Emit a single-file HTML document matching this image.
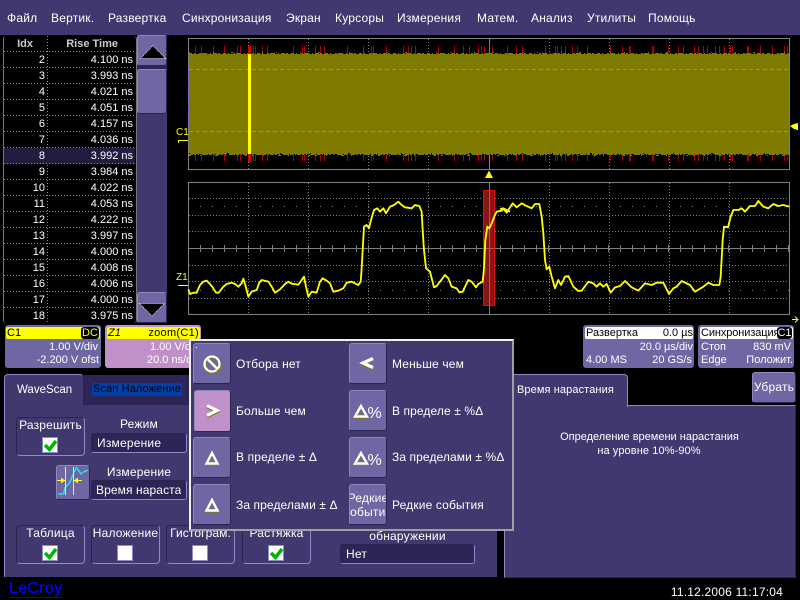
<!DOCTYPE html>
<html><head><meta charset="utf-8">
<style>
html,body{margin:0;padding:0;background:#000;}
#s{position:relative;width:800px;height:600px;overflow:hidden;background:#000;font-family:"Liberation Sans",sans-serif;font-size:12px;color:#fff;letter-spacing:.2px;}
#s div,#s svg{position:absolute;}
.t{white-space:nowrap;line-height:14px;}
.m{top:11px;}
.s{font-size:11px;letter-spacing:0;}
.r{position:absolute;left:4px;width:131px;height:16px;background:repeating-linear-gradient(90deg,#909090 0 1px,transparent 1px 3px) 0 15px/131px 1px no-repeat;}
.r b{font-weight:normal;position:absolute;right:90px;top:1px;line-height:14px;font-size:11px;letter-spacing:0;}
.r i{font-style:normal;position:absolute;right:2px;top:1px;line-height:14px;font-size:11px;letter-spacing:0;white-space:nowrap;}
.btn{background:#6f66a4;border:1px solid;border-color:#8f87c0 #2b2450 #2b2450 #8f87c0;border-radius:3px;box-sizing:border-box;}
.grp{box-sizing:border-box;border:1px solid;border-color:#2b2450 #9088c8 #9088c8 #2b2450;border-radius:4px;}
.cb{box-sizing:border-box;width:16px;height:16px;background:#fff;border:1px solid #9088c8;}
.cmb{box-sizing:border-box;background:#2c2555;border:1px solid;border-color:#2b2450 #9088c8 #9088c8 #2b2450;border-radius:3px;overflow:hidden;white-space:nowrap;line-height:18px;padding-left:5px;}
.c{text-align:center;}
</style></head><body><div id="s">

<div style="left:0;top:0;width:800px;height:35px;background:#423870"></div>
<div class="t m" style="left:7px">Файл</div>
<div class="t m" style="left:51px">Вертик.</div>
<div class="t m" style="left:108px">Развертка</div>
<div class="t m" style="left:182px">Синхронизация</div>
<div class="t m" style="left:286px">Экран</div>
<div class="t m" style="left:335px">Курсоры</div>
<div class="t m" style="left:397px">Измерения</div>
<div class="t m" style="left:477px">Матем.</div>
<div class="t m" style="left:531px">Анализ</div>
<div class="t m" style="left:587px">Утилиты</div>
<div class="t m" style="left:648px">Помощь</div>

<!-- table -->
<div style="left:3px;top:36px;width:132px;height:287px;border-left:1px solid #777;border-right:1px solid #777;border-radius:3px"></div>
<div style="left:47px;top:36px;width:1px;height:287px;background:repeating-linear-gradient(180deg,#909090 0 1px,transparent 1px 3px)"></div>
<div class="r" style="top:36px"><b style="right:102px;color:#ccc;font-weight:bold">Idx</b><i style="right:17px;color:#ccc;font-weight:bold">Rise Time</i></div>
<div class="r" style="top:52px"><b>2</b><i>4.100 ns</i></div>
<div class="r" style="top:68px"><b>3</b><i>3.993 ns</i></div>
<div class="r" style="top:84px"><b>4</b><i>4.021 ns</i></div>
<div class="r" style="top:100px"><b>5</b><i>4.051 ns</i></div>
<div class="r" style="top:116px"><b>6</b><i>4.157 ns</i></div>
<div class="r" style="top:132px"><b>7</b><i>4.036 ns</i></div>
<div class="r" style="top:148px;background-color:#221c40"><b>8</b><i>3.992 ns</i></div>
<div class="r" style="top:164px"><b>9</b><i>3.984 ns</i></div>
<div class="r" style="top:180px"><b>10</b><i>4.022 ns</i></div>
<div class="r" style="top:196px"><b>11</b><i>4.053 ns</i></div>
<div class="r" style="top:212px"><b>12</b><i>4.222 ns</i></div>
<div class="r" style="top:228px"><b>13</b><i>3.997 ns</i></div>
<div class="r" style="top:244px"><b>14</b><i>4.000 ns</i></div>
<div class="r" style="top:260px"><b>15</b><i>4.008 ns</i></div>
<div class="r" style="top:276px"><b>16</b><i>4.006 ns</i></div>
<div class="r" style="top:292px"><b>17</b><i>4.000 ns</i></div>
<div class="r" style="top:308px;background:none"><b>18</b><i>3.975 ns</i></div>

<!-- scrollbar -->
<div style="left:137px;top:35px;width:30px;height:288px;background:#423870"></div>
<div class="btn" style="left:137px;top:35px;width:30px;height:31px"></div>
<div style="left:137px;top:66px;width:30px;height:3px;background:#2c2555"></div>
<div class="btn" style="left:137px;top:69px;width:30px;height:45px"></div>
<div class="btn" style="left:137px;top:292px;width:30px;height:31px"></div>
<svg style="left:0;top:0" width="800" height="600">
<polygon points="140.500,58.500 153,45.500 165.500,58.500" fill="#000" stroke="#ddd" stroke-width="1" stroke-dasharray="1 1"/>
<polygon points="139.500,303.500 164.500,303.500 152,316" fill="#000" stroke="#ddd" stroke-width="1" stroke-dasharray="1 1"/>

<!-- upper grid -->
<g fill="none" stroke="#808080">
<path d="M248.5 39V169M308.5 39V169M368.5 39V169M428.5 39V169M549.5 39V169M609.5 39V169M669.5 39V169M729.5 39V169" stroke-dasharray="1 2"/>
<path d="M489.5 39V169"/>
<rect x="188.5" y="38.5" width="601" height="131"/>
</g>
<g transform="translate(.5,0)" stroke="#a00808" stroke-width="1" fill="none">
<path d="M195 46V54M201 46V54M213 46V54M224 46V54M237 46V54M240 46V54M253 46V54M255 46V54M262 46V54M267 46V54M293 46V54M302 46V54M304 46V54M315 46V54M320 46V54M324 46V54M347 46V54M363 46V54M371 46V54M373 46V54M386 46V54M403 46V54M408 46V54M411 46V54M415 46V54M438 46V54M454 46V54M463 46V54M469 46V54M478 46V54M481 46V54M484 46V54M492 46V54M507 46V54M516 46V54M522 46V54M545 46V54M555 46V54M557 46V54M561 46V54M565 46V54M572 46V54M577 46V54M587 46V54M610 46V54M622 46V54M629 46V54M630 46V54M652 46V54M653 46V54M668 46V54M678 46V54M683 46V54M694 46V54M698 46V54M703 46V54M707 46V54M715 46V54M719 46V54M724 46V54M730 46V54M732 46V54M747 46V54M748 46V54M760 46V54M772 46V54M784 46V54M787 46V54"/>
<path d="M195 152V161M201 152V161M213 152V161M224 152V161M237 152V161M240 152V161M253 152V161M255 152V161M262 152V161M267 152V161M293 152V161M302 152V161M304 152V161M315 152V161M320 152V161M324 152V161M347 152V161M363 152V161M371 152V161M373 152V161M386 152V161M403 152V161M408 152V161M411 152V161M415 152V161M438 152V161M454 152V161M463 152V161M469 152V161M478 152V161M481 152V161M484 152V161M492 152V161M507 152V161M516 152V161M522 152V161M545 152V161M555 152V161M557 152V161M561 152V161M565 152V161M572 152V161M577 152V161M587 152V161M610 152V161M622 152V161M629 152V161M630 152V161M652 152V161M653 152V161M668 152V161M678 152V161M683 152V161M694 152V161M698 152V161M703 152V161M707 152V161M715 152V161M719 152V161M724 152V161M730 152V161M732 152V161M747 152V161M748 152V161M760 152V161M772 152V161M784 152V161M787 152V161"/>
</g>
<rect x="189" y="54" width="600" height="100" fill="#7f7a00"/>
<path d="M189 53.5H789" stroke="#7f7a00" stroke-dasharray="3 2 1 4 2 1 5 3 1 2 4 1 2 3"/>
<path d="M189 52.5H789" stroke="#7f7a00" stroke-dasharray="1 23 1 17 2 29 1 13"/>
<path d="M189 154.5H789" stroke="#7f7a00" stroke-dasharray="4 1 2 2 1 3 6 1 3 2 1 1"/>
<path d="M189 155.5H789" stroke="#7f7a00" stroke-dasharray="2 9 1 14 3 7 1 19 2 5"/>
<path d="M189 153.5H789" stroke="#000" stroke-dasharray="1 37 2 51 1 29"/>
<path d="M189 69.5H789M189 131.5H789" stroke="#8f86cc" stroke-dasharray="4 3"/>
<path d="M188.5 69V131" stroke="#6a60e0" stroke-dasharray="8 4"/>
<rect x="248" y="46" width="3" height="9" fill="#e00000"/>
<rect x="248" y="153" width="3" height="9" fill="#e00000"/>
<rect x="248" y="54" width="3" height="100" fill="#ffff00"/>
<path d="M178 140.5H188M178.5 140V143" stroke="#ff0" fill="none"/>
<polygon points="790,126 794,124 798,123 798,130 794,129" fill="#ff0"/>
<polygon points="489,170.5 485,178 493,178" fill="#ff0"/>

<!-- lower grid -->
<g fill="none" stroke="#808080">
<path d="M189 198.5H789M189 215.5H789M189 231.5H789M189 265.5H789M189 281.5H789M189 298.5H789" stroke-dasharray="1 2"/>
<path d="M248.5 183V314M308.5 183V314M368.5 183V314M428.5 183V314M549.5 183V314M609.5 183V314M669.5 183V314M729.5 183V314" stroke-dasharray="1 2"/>
<path d="M189 248.5H789M489.5 183V314"/>
<path d="M189 206.5H789M189 290.5H789" stroke-dasharray="1 11" stroke-dashoffset="-11"/>
<path d="M189 248.5H789" stroke-width="7" stroke-dasharray="1 11" stroke-dashoffset="-11"/>
<rect x="188.5" y="182.5" width="601" height="132"/>
</g>
<rect x="483.5" y="190.5" width="11" height="115" fill="#8a1414" stroke="#e01010"/>
<path d="M489.5 190V306M484 248.5H494" stroke="#a06060" fill="none"/>
<path d="M178 285.5H188" stroke="#ff0" fill="none"/>
<g fill="none" stroke="#ffff00" stroke-linejoin="round">
<g transform="translate(170,170) scale(.33333)" stroke-width="5.500">
<polyline points="55,358 60,372 70,368 80,368 90,345 100,335 110,332 120,342 128,352 138,368 146,368 160,350 170,342 185,338 195,342 205,350 215,340 220,326 226,345 235,380 245,365 260,360 268,338 275,330 295,335 305,350 315,368 330,358 345,342 355,335 365,341 385,344 395,330 402,320 408,350 415,380 425,365 440,368 450,335 458,325 470,332 480,340 490,365 505,362 520,355 530,338 545,335 565,345 572,335 575,295 578,240 582,170 590,165 597,175 603,150 612,120 622,115 630,125 640,115 648,130 660,110 672,105 685,95 695,105 705,112 725,115 735,105 748,108 755,125 758,180 762,240 768,295 780,305 792,352 800,348 810,335 825,315 835,325 845,350 860,355 868,367 878,365 895,330 905,335 918,352 925,342 938,335 942,295 946,210 952,170 958,175 965,160 975,135 980,125 995,122 1000,115 1020,125"/>
</g>
<g transform="translate(500,170) scale(.33333)" stroke-width="5.500">
<polyline points="0,118 8,115 20,128 38,100 50,112 65,100 80,108 95,115 105,102 118,102 125,140 130,190 135,270 140,298 148,290 155,320 165,355 175,330 183,345 195,320 205,318 220,350 235,363 245,362 265,335 280,340 290,350 300,340 310,350 320,342 332,368 345,352 360,348 375,333 395,352 415,362 435,340 455,345 470,338 490,338 507,372 520,355 530,350 545,333 570,345 585,365 610,350 625,338 640,345 658,345 662,320 668,210 672,170 684,172 692,140 700,120 715,120 725,115 735,125 750,108 765,108 775,93 790,110 805,115 820,102 835,108 850,105 868,110"/>
</g>
</g>
<path d="M792 319.5H797M795 316.5L798 319.5L795 322.5" stroke="#ff0" fill="none"/>
</svg>
<div class="t" style="left:176px;top:126px;color:#ff0;font-size:10px;letter-spacing:0">C1</div>
<div class="t" style="left:176px;top:271px;color:#ff0;font-size:10px;letter-spacing:0">Z1</div>

<!-- channel boxes -->
<div style="left:5px;top:325px;width:96px;height:43px;background:#6f66a4;border-radius:3px"></div>
<div style="left:6px;top:327px;width:94px;height:12px;background:#ff0;border-radius:2px"></div>
<div class="t s" style="left:7px;top:326px;color:#000">C1</div>
<div class="t" style="left:81px;top:327px;width:18px;height:12px;line-height:12px;background:#000;color:#ff0;font-size:11px;letter-spacing:0;text-align:center;border-radius:3px">DC</div>
<div class="t s" style="right:702px;top:340px">1.00 V/div</div>
<div class="t s" style="right:701px;top:353px">-2.200 V ofst</div>

<div style="left:105px;top:325px;width:96px;height:43px;background:#c090c8;border-radius:3px"></div>
<div style="left:107px;top:327px;width:93px;height:12px;background:#ff0;border-radius:2px"></div>
<div class="t s" style="left:108px;top:326px;color:#000;font-style:italic">Z1</div>
<div class="t s" style="right:601px;top:326px;color:#000;letter-spacing:.3px">zoom(C1)</div>
<div class="t s" style="left:150px;top:340px">1.00 V/div</div>
<div class="t s" style="left:147px;top:353px">20.0 ns/div</div>

<div style="left:583px;top:325px;width:111px;height:43px;background:#6f66a4;border-radius:3px"></div>
<div style="left:585px;top:327px;width:108px;height:12px;background:#fff;border-radius:2px"></div>
<div class="t s" style="left:586px;top:326px;color:#000">Развертка</div>
<div class="t s" style="right:107px;top:326px;color:#000">0.0 µs</div>
<div class="t s" style="right:107px;top:340px">20.0 µs/div</div>
<div class="t s" style="left:586px;top:353px">4.00 MS</div>
<div class="t s" style="right:108px;top:353px">20 GS/s</div>

<div style="left:698px;top:325px;width:96px;height:43px;background:#6f66a4;border-radius:3px"></div>
<div style="left:700px;top:327px;width:93px;height:12px;background:#fff;border-radius:2px"></div>
<div class="t s" style="left:701px;top:326px;color:#000;letter-spacing:-.1px">Синхронизация</div>
<div class="t" style="left:777px;top:327px;width:15px;height:12px;line-height:12px;background:#000;color:#fff;font-size:11px;letter-spacing:0;text-align:center;border-radius:3px">C1</div>
<div class="t s" style="left:701px;top:340px">Стоп</div>
<div class="t s" style="right:9px;top:340px">830 mV</div>
<div class="t s" style="left:701px;top:353px">Edge</div>
<div class="t s" style="right:7px;top:353px">Положит.</div>

<!-- left panel -->
<div style="left:84px;top:375px;width:413px;height:30px;background:#2c2555"></div>
<div style="left:4px;top:405px;width:493px;height:172px;background:#423870;border-left:1px solid #9088c8;box-sizing:border-box"></div>
<div style="left:4px;top:374px;width:80px;height:32px;background:#423870;border-top:1px solid #9088c8;border-left:1px solid #9088c8;border-right:1px solid #2b2450;border-radius:4px 4px 0 0;box-sizing:border-box"></div>
<div class="t" style="left:17px;top:383px;letter-spacing:0;font-size:11.500px">WaveScan</div>
<div class="t" style="left:92px;top:383px;width:90px;height:13px;line-height:13px;background:#0040a8;color:#000;border-radius:2px;font-size:11px;text-align:center;letter-spacing:.1px">Scan Наложение</div>

<div class="grp" style="left:16px;top:417px;width:69px;height:39px"></div>
<div class="t c" style="left:16px;top:418px;width:69px">Разрешить</div>
<div class="cb" style="left:42px;top:437px"></div>
<div class="t c" style="left:91px;top:417px;width:96px">Режим</div>
<div class="cmb" style="left:91px;top:433px;width:96px;height:20px">Измерение</div>

<div class="btn" style="left:56px;top:465px;width:34px;height:35px"></div>
<svg style="left:56px;top:465px" width="34" height="35" fill="none">
<path d="M2 29H7.500L9 23L14 17L18 7L20.500 2.500L23.500 7L25 9L27.500 7L32 5" stroke="#20e8e8" stroke-width="1.400"/>
<path d="M9.500 2V30M17.500 2V30" stroke="#ff0"/>
<path d="M1 15.500H9M18 15.500H26" stroke="#ff0"/>
<path d="M5 12.500L9 15.500L5 18.500ZM22 12.500L18 15.500L22 18.500Z" fill="#ff0"/>
</svg>
<div class="t c" style="left:91px;top:465px;width:96px">Измерение</div>
<div class="cmb" style="left:91px;top:480px;width:96px;height:20px;padding:0"><div class="t" style="left:4px;top:2px;width:85px;overflow:hidden;letter-spacing:.1px">Время нарастания</div></div>

<div class="grp" style="left:16px;top:525px;width:69px;height:39px"></div>
<div class="grp" style="left:91px;top:525px;width:69px;height:39px"></div>
<div class="grp" style="left:166px;top:525px;width:69px;height:39px"></div>
<div class="grp" style="left:242px;top:525px;width:69px;height:39px"></div>
<div class="t c" style="left:16px;top:526px;width:69px">Таблица</div>
<div class="t c" style="left:91px;top:526px;width:69px">Наложение</div>
<div class="t c" style="left:166px;top:526px;width:69px;letter-spacing:.1px">Гистограм.</div>
<div class="t c" style="left:242px;top:526px;width:69px">Растяжка</div>
<div class="cb" style="left:42px;top:545px"></div>
<div class="cb" style="left:117px;top:545px"></div>
<div class="cb" style="left:192px;top:545px"></div>
<div class="cb" style="left:268px;top:545px"></div>
<svg style="left:0;top:0" width="800" height="600" fill="none" stroke="#00b400" stroke-width="3.500">
<path d="M45 445L49.500 449.500L56 441"/><path d="M45 553L49.500 557.500L56 549"/><path d="M271 553L275.500 557.500L282 549"/>
</svg>
<div class="t c" style="left:340px;top:529px;width:135px">обнаружении</div>
<div class="cmb" style="left:340px;top:544px;width:135px;height:20px">Нет</div>

<!-- right panel -->
<div style="left:504px;top:405px;width:292px;height:173px;background:#423870;border:1px solid #9088c8;border-right-color:#2b2450;border-bottom-color:#2b2450;box-sizing:border-box"></div>
<div style="left:504px;top:374px;width:124px;height:33px;background:#423870;border-top:1px solid #9088c8;border-left:1px solid #9088c8;border-right:1px solid #9088c8;border-radius:4px 4px 0 0;box-sizing:border-box"></div>
<div class="t" style="left:517px;top:383px;font-size:11px;letter-spacing:.1px">Время нарастания</div>
<div class="btn t c" style="left:752px;top:372px;width:44px;height:31px;line-height:28px">Убрать</div>
<div class="t c" style="left:504px;top:430px;width:291px;font-size:11px;letter-spacing:0">Определение времени нарастания</div>
<div class="t c" style="left:504px;top:444px;width:290px;font-size:11px;letter-spacing:.1px">на уровне 10%-90%</div>

<!-- footer -->
<div class="t" style="left:9px;top:581px;color:#0000ff;font-size:16px;letter-spacing:.3px;line-height:16px;border-bottom:1px solid #0000ff;-webkit-text-stroke:.3px #0000ff">LeCroy</div>
<div class="t" style="right:17px;top:585px;letter-spacing:.2px">11.12.2006 11:17:04</div>

<!-- popup -->
<div style="left:189px;top:339px;width:325px;height:192px;box-sizing:border-box;background:#423870;border:2px solid;border-color:#f0f0e8 #a0a0a0 #a0a0a0 #f0f0e8"></div>
<div class="btn" style="left:193px;top:343px;width:38px;height:41px"></div>
<div class="btn" style="left:194px;top:390px;width:37px;height:42px;background:#c090c8"></div>
<div class="btn" style="left:193px;top:437px;width:38px;height:41px"></div>
<div class="btn" style="left:193px;top:484px;width:38px;height:41px"></div>
<div class="btn" style="left:349px;top:343px;width:38px;height:41px"></div>
<div class="btn" style="left:349px;top:390px;width:38px;height:41px"></div>
<div class="btn" style="left:349px;top:437px;width:38px;height:41px"></div>
<div class="btn t c" style="left:349px;top:484px;width:38px;height:41px;overflow:hidden;line-height:14px;padding-top:6px"><span style="display:block;margin:0 -10px">Редкие</span><span style="display:block;margin:0 -10px">события</span></div>
<svg style="left:0;top:0" width="800" height="600" fill="none">
<rect x="196" y="347" width="1" height="1" fill="#fff"/>
<circle cx="212.800" cy="365.300" r="7.500" stroke="#807a20" stroke-width="2.800"/>
<circle cx="212" cy="364" r="7.500" stroke="#fff" stroke-width="2.200"/>
<path d="M207 358.500L218 369.500" stroke="#807a20" stroke-width="2.800" transform="translate(.5,.8)"/>
<path d="M207 358.500L218 369.500" stroke="#fff" stroke-width="2.500"/>
<path d="M207 405.500L217 410.500L207 415.500" stroke="#807a20" stroke-width="3.200" transform="translate(0,1.300)"/>
<path d="M207 405.500L217 410.500L207 415.500" stroke="#fff" stroke-width="3.200"/>
<path d="M373 358.500L363 363L373 367.500" stroke="#807a20" stroke-width="3.200" transform="translate(0,1.300)"/>
<path d="M373 358.500L363 363L373 367.500" stroke="#fff" stroke-width="3.200"/>
<g stroke-width="2.400">
<polygon points="212,453 206.500,463.500 217.500,463.500" stroke="#807a20" transform="translate(.5,1)"/>
<polygon points="212,453 206.500,463.500 217.500,463.500" stroke="#fff"/>
<polygon points="212,500 206.500,510.500 217.500,510.500" stroke="#807a20" transform="translate(.5,1)"/>
<polygon points="212,500 206.500,510.500 217.500,510.500" stroke="#fff"/>
<polygon points="361,406 355,416.500 367,416.500" stroke="#807a20" transform="translate(.5,1)"/>
<polygon points="361,406 355,416.500 367,416.500" stroke="#fff"/>
<polygon points="361,453 355,463.500 367,463.500" stroke="#807a20" transform="translate(.5,1)"/>
<polygon points="361,453 355,463.500 367,463.500" stroke="#fff"/>
</g>
<text x="367.500" y="418" fill="#fff" font-family="Liberation Sans" font-size="16" letter-spacing="0">%</text>
<text x="367.500" y="465" fill="#fff" font-family="Liberation Sans" font-size="16" letter-spacing="0">%</text>
</svg>
<div class="t" style="left:236px;top:357px;letter-spacing:.15px">Отбора нет</div>
<div class="t" style="left:236px;top:404px;letter-spacing:.15px">Больше чем</div>
<div class="t" style="left:236px;top:450px;letter-spacing:.15px">В пределе ± Δ</div>
<div class="t" style="left:236px;top:498px;letter-spacing:.1px">За пределами ± Δ</div>
<div class="t" style="left:392px;top:357px;letter-spacing:.15px">Меньше чем</div>
<div class="t" style="left:392px;top:404px;letter-spacing:.1px">В пределе ± %Δ</div>
<div class="t" style="left:392px;top:450px;letter-spacing:.1px">За пределами ± %Δ</div>
<div class="t" style="left:392px;top:498px;letter-spacing:.15px">Редкие события</div>
</div></body></html>
